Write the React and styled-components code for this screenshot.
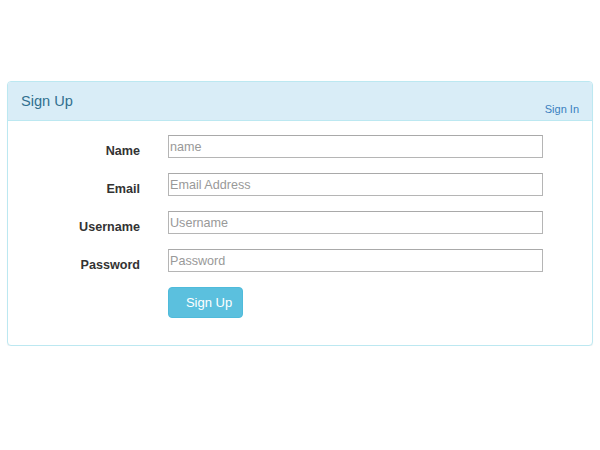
import React from 'react';
import styled, { createGlobalStyle } from 'styled-components';

const GlobalStyle = createGlobalStyle`
    body {
        margin: 0;
        background: #fff;
        font-family: "Liberation Sans", Arial, sans-serif;
        color: #333;
    }
`;

const Page = styled.div`
    padding: 81px 7px 0 7px;
`;

const Panel = styled.div`
    border: 1px solid #bce8f1;
    border-radius: 4px;
    background: #fff;
    box-shadow: 0 1px 1px rgba(0, 0, 0, 0.05);
`;

const Heading = styled.div`
    display: flex;
    justify-content: space-between;
    align-items: flex-end;
    height: 39px;
    box-sizing: border-box;
    padding: 0 13px 5px 13px;
    background: #d9edf7;
    border-bottom: 1px solid #bce8f1;
    border-radius: 3px 3px 0 0;
`;

const Title = styled.h3`
    margin: 0 0 6px 0;
    font-size: 14.6px;
    font-weight: normal;
    color: #31708f;
`;

const SignInLink = styled.a`
    font-size: 11px;
    color: #3a7fc0;
    text-decoration: none;
    cursor: pointer;
`;

const Body = styled.form`
    display: flex;
    flex-direction: column;
    gap: 15px;
    padding: 14px 0 27px 0;
`;

const Row = styled.div`
    display: flex;
    align-items: flex-start;
`;

const Label = styled.label`
    width: 132px;
    margin-right: 28px;
    padding-top: 9px;
    text-align: right;
    font-size: 12.6px;
    font-weight: bold;
    color: #333;
`;

const Input = styled.input`
    width: 375px;
    height: 23px;
    box-sizing: border-box;
    margin: 0;
    padding: 0 1px;
    border: 1px solid #b5b5b5;
    border-top-color: #a9a9a9;
    font-family: "Liberation Sans", Arial, sans-serif;
    font-size: 12.6px;
    color: #555;
    outline: none;
    &::placeholder {
        color: #999;
    }
`;

const Button = styled.button`
    margin-left: 160px;
    width: 75px;
    height: 31px;
    padding: 0 0 0 7px;
    border: 1px solid #4fbbdb;
    border-radius: 4px;
    background: #5bc0de;
    color: #fff;
    font-family: "Liberation Sans", Arial, sans-serif;
    font-size: 13px;
    cursor: pointer;
`;

const fields = [
    { label: 'Name', placeholder: 'name', type: 'text' },
    { label: 'Email', placeholder: 'Email Address', type: 'email' },
    { label: 'Username', placeholder: 'Username', type: 'text' },
    { label: 'Password', placeholder: 'Password', type: 'password' },
];

const App = () => {
    return (
        <>
            <GlobalStyle />
            <Page>
                <Panel>
                    <Heading>
                        <Title>Sign Up</Title>
                        <SignInLink>Sign In</SignInLink>
                    </Heading>
                    <Body onSubmit={(e) => e.preventDefault()}>
                        {fields.map((field) => (
                            <Row key={field.label}>
                                <Label>{field.label}</Label>
                                <Input type={field.type} placeholder={field.placeholder} />
                            </Row>
                        ))}
                        <Button type="submit">Sign Up</Button>
                    </Body>
                </Panel>
            </Page>
        </>
    );
};

export default App;
